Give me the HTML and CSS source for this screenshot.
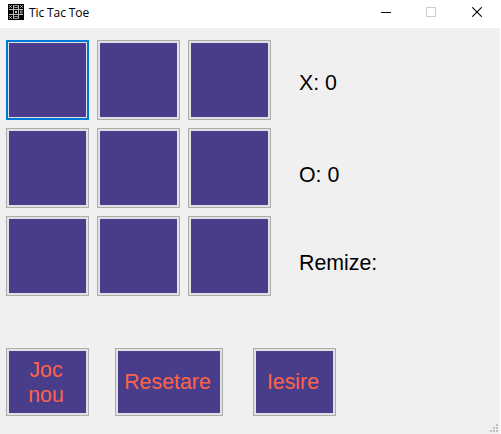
FILE: index.html
```html
<!DOCTYPE html>
<html lang="ro">
<head>
<meta charset="utf-8">
<title>Tic Tac Toe</title>
<link rel="stylesheet" href="styles.css">
</head>
<body>
<div class="window">
  <header class="titlebar">
    <svg class="app-icon" width="16" height="16" viewBox="0 0 16 16">
      <rect width="16" height="16" fill="#000"/>
      <path d="M5.500 1v14M10.500 1v14M1 5.500h14M1 10.500h14" stroke="#bbb" fill="none"/>
      <path d="M1.300 1.300l2.400 2.400M3.700 1.300l-2.400 2.400M12.300 1.300l2.400 2.400M14.700 1.300l-2.400 2.400M1.300 12.300l2.400 2.400M3.700 12.300l-2.400 2.400" stroke="#ccc" fill="none"/>
      <rect x="7" y="1.500" width="2" height="2" fill="none" stroke="#aaa"/>
      <rect x="7" y="7" width="2" height="2" fill="#ccc"/>
      <rect x="12.500" y="7" width="1.500" height="2" fill="none" stroke="#888"/>
      <rect x="7" y="12.500" width="2" height="2" fill="none" stroke="#aaa"/>
    </svg>
    <span class="title">Tic Tac Toe</span>
    <div class="controls">
      <svg width="10" height="10" viewBox="0 0 10 10"><path d="M0 5.500h10" stroke="#000"/></svg>
      <svg width="10" height="10" viewBox="0 0 10 10"><rect x=".5" y=".5" width="9" height="9" fill="none" stroke="#ccc"/></svg>
      <svg class="close" width="10" height="10" viewBox="0 0 10 10"><path d="M.3 .3l9.400 9.400M9.700 .3l-9.400 9.400" stroke="#000" stroke-width="1.100"/></svg>
    </div>
  </header>
  <main class="client">
    <section class="game">
      <div class="board">
        <button class="button focused"></button><button class="button"></button><button class="button"></button>
        <button class="button"></button><button class="button"></button><button class="button"></button>
        <button class="button"></button><button class="button"></button><button class="button"></button>
      </div>
      <div class="scores">
        <div class="score-x">X: 0</div>
        <div class="score-o">O: 0</div>
        <div class="score-draw">Remize:</div>
      </div>
    </section>
    <nav class="actions">
      <button class="button two-line">Joc<br>nou</button>
      <button class="button">Resetare</button>
      <button class="button">Iesire</button>
    </nav>
    <svg class="grip" width="8" height="8" viewBox="0 0 8 8"><path d="M6 0h2v2h-2zM3 3h2v2h-2zM6 3h2v2h-2zM0 6h2v2h-2zM3 6h2v2h-2zM6 6h2v2h-2z" fill="#bfbfbf"/></svg>
  </main>
</div>
</body>
</html>
```
FILE: styles.css
```css
* { box-sizing: border-box; }
body { margin: 0; background: #fff; overflow: hidden; }
.window { width: 500px; height: 434px; display: flex; flex-direction: column; }
.titlebar {
  height: 28px;
  padding: 0 18px 4px 8px;
  display: flex;
  align-items: center;
  background: #fff;
}
.app-icon { display: block; }
.title {
  margin-left: 5px;
  padding-top: 1px;
  font: 12px/17px "Open Sans", sans-serif;
  letter-spacing: -0.1px;
  color: #000;
}
.controls { margin-left: auto; display: flex; gap: 35px; }
.controls svg { display: block; }
.controls .close { margin-left: 1px; }
.client {
  position: relative;
  flex: 1;
  padding: 12px 6px;
  background: #f0f0f0;
  font: 21.33px/25px "Liberation Sans", Arial, sans-serif;
}
.game { display: flex; }
.board {
  display: grid;
  grid-template-columns: repeat(3, 83px);
  grid-template-rows: repeat(3, 80px);
  gap: 8px;
}
.button {
  margin: 0;
  padding: 0;
  border: 1px solid #adadad;
  background: #483d8b;
  box-shadow: inset 0 0 0 2px #e1e1e1;
  color: #ff6347;
  font: inherit;
  outline: none;
}
.focused {
  border: 2px solid #0078d7;
  box-shadow: inset 0 0 0 1px #e1e1e1;
}
.scores { margin-left: 28px; padding-top: 31px; }
.score-o { margin-top: 67px; }
.score-draw { margin-top: 63px; }
.actions {
  margin-top: 52px;
  display: grid;
  grid-template-columns: 83px 108px 83px;
  grid-template-rows: 68px;
  column-gap: 26px;
}
.actions .button { padding: 0 3px 0 0; }
.actions .two-line { padding-top: 2px; }
.actions .button:last-child { margin: 0 -4px 0 4px; }
.grip { position: absolute; right: 2px; bottom: 2px; }
```
